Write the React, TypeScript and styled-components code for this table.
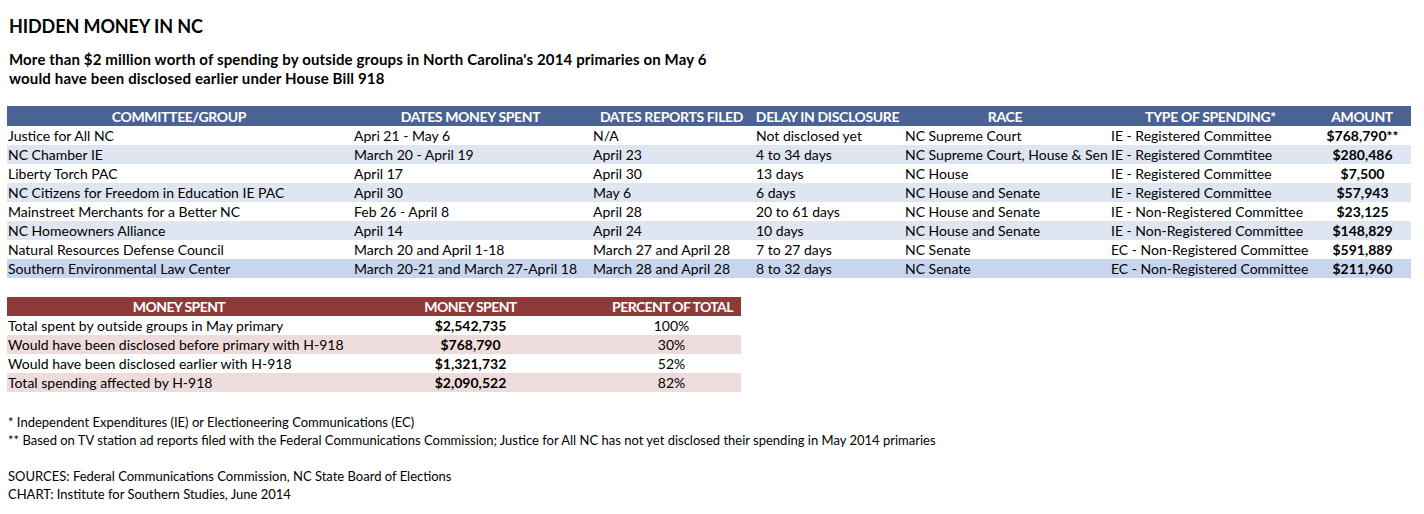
import React from "react";
import styled, { createGlobalStyle } from "styled-components";

const GlobalStyle = createGlobalStyle`
  html, body { margin: 0; padding: 0; background: #ffffff; }
  body { font-family: Lato, "Liberation Sans", sans-serif; color: #000; }
`;

const BLUE_COLS = "344px 239px 163px 149px 206px 205px 98px";
const RED_COLS = "344px 239px 151px";

const Page = styled.div`
  width: 1424px;
  height: 514px;
  box-sizing: border-box;
  padding-left: 7px;
  overflow: hidden;
`;

const Title = styled.h1`
  margin: 0;
  padding: 15px 0 0 2px;
  font-size: 18px;
  line-height: 22px;
  font-weight: 700;
  letter-spacing: -0.1px;
`;

const Subtitle = styled.p`
  margin: 13px 0 0 2px;
  font-size: 15px;
  line-height: 19px;
  font-weight: 700;
  letter-spacing: 0.15px;
`;

const Table = styled.div<{ $top: number; $width: number }>`
  margin-top: ${(p) => p.$top}px;
  width: ${(p) => p.$width}px;
`;

const Row = styled.div<{ $cols: string; $bg: string; $h: number }>`
  display: grid;
  grid-template-columns: ${(p) => p.$cols};
  height: ${(p) => p.$h}px;
  background: ${(p) => p.$bg};
`;

const HeadCell = styled.div<{ $tight?: boolean; $pl?: number }>`
  color: #fff;
  font-weight: 700;
  font-size: 14px;
  line-height: inherit;
  text-align: center;
  white-space: nowrap;
  overflow: hidden;
  padding-left: ${(p) => p.$pl ?? 0}px;
  letter-spacing: ${(p) => (p.$tight ? "-0.6px" : "-0.35px")};
  display: flex;
  align-items: center;
  justify-content: center;
`;

const Cell = styled.div<{ $align?: string; $bold?: boolean; $pl?: number }>`
  padding: 0 2px 0 ${(p) => p.$pl ?? 2}px;
  font-size: 14px;
  line-height: 19px;
  text-align: ${(p) => p.$align ?? "left"};
  font-weight: ${(p) => (p.$bold ? 700 : 400)};
  white-space: nowrap;
  overflow: hidden;
`;

const Notes = styled.div`
  margin-top: 21px;
  padding-left: 1px;
  font-size: 13px;
  line-height: 18px;
`;

const NoteLine = styled.div`
  height: 18px;
`;

const blueHead = [
  "COMMITTEE/GROUP",
  "DATES MONEY SPENT",
  "DATES REPORTS FILED",
  "DELAY IN DISCLOSURE",
  "RACE",
  "TYPE OF SPENDING*",
  "AMOUNT",
];

const blueRows: string[][] = [
  ["Justice for All NC", "Apri 21 - May 6", "N/A", "Not disclosed yet", "NC Supreme Court", "IE - Registered Committee", "$768,790**"],
  ["NC Chamber IE", "March 20 - April 19", "April 23", "4 to 34 days", "NC Supreme Court, House & Senate", "IE - Registered Commtitee", "$280,486"],
  ["Liberty Torch PAC", "April 17", "April 30", "13 days", "NC House", "IE - Registered Committee", "$7,500"],
  ["NC Citizens for Freedom in Education IE PAC", "April 30", "May 6", "6 days", "NC House and Senate", "IE - Registered Committee", "$57,943"],
  ["Mainstreet Merchants for a Better NC", "Feb 26 - April 8", "April 28", "20 to 61 days", "NC House and Senate", "IE - Non-Registered Committee", "$23,125"],
  ["NC Homeowners Alliance", "April 14", "April 24", "10 days", "NC House and Senate", "IE - Non-Registered Committee", "$148,829"],
  ["Natural Resources Defense Council", "March 20 and April 1-18", "March 27 and April 28", "7 to 27 days", "NC Senate", "EC - Non-Registered Committee", "$591,889"],
  ["Southern Environmental Law Center", "March 20-21 and March 27-April 18", "March 28 and April 28", "8 to 32 days", "NC Senate", "EC - Non-Registered Committee", "$211,960"],
];

const blueBg = ["#ffffff", "#dfe5f1", "#ffffff", "#dfe5f1", "#ffffff", "#dfe5f1", "#ffffff", "#c7d6ee"];

const redHead = ["MONEY SPENT", "MONEY SPENT", "PERCENT OF TOTAL"];
const redRows: string[][] = [
  ["Total spent by outside groups in May primary", "$2,542,735", "100%"],
  ["Would have been disclosed before primary with H-918", "$768,790", "30%"],
  ["Would have been disclosed earlier with H-918", "$1,321,732", "52%"],
  ["Total spending affected by H-918", "$2,090,522", "82%"],
];
const redBg = ["#ffffff", "#eedcdc", "#ffffff", "#eedcdc"];

export default function App() {
  return (
    <Page>
      <GlobalStyle />
      <Title>HIDDEN MONEY IN NC</Title>
      <Subtitle>
        More than $2 million worth of spending by outside groups in North Carolina's 2014 primaries on May 6
        <br />
        would have been disclosed earlier under House Bill 918
      </Subtitle>

      <Table $top={18} $width={1404}>
        <Row $cols={BLUE_COLS} $bg="#4a6392" $h={20}>
          {blueHead.map((h) => (
            <HeadCell key={h}>{h}</HeadCell>
          ))}
        </Row>
        {blueRows.map((r, i) => (
          <Row key={r[0]} $cols={BLUE_COLS} $bg={blueBg[i]} $h={19}>
            {r.map((c, j) => (
              <Cell
                key={j}
                $pl={j === 0 ? 1 : 3}
                $align={j === 6 ? "center" : "left"}
                $bold={j === 6}
              >
                {c}
              </Cell>
            ))}
          </Row>
        ))}
      </Table>

      <Table $top={19} $width={734}>
        <Row $cols={RED_COLS} $bg="#8d3a39" $h={19}>
          {redHead.map((h, i) => (
            <HeadCell key={i} $tight $pl={i === 2 ? 14 : 0}>
              {h}
            </HeadCell>
          ))}
        </Row>
        {redRows.map((r, i) => (
          <Row key={r[0]} $cols={RED_COLS} $bg={redBg[i]} $h={19}>
            {r.map((c, j) => (
              <Cell key={j} $pl={j === 0 ? 1 : j === 2 ? 14 : 2} $align={j === 0 ? "left" : "center"} $bold={j === 1}>
                {c}
              </Cell>
            ))}
          </Row>
        ))}
      </Table>

      <Notes>
        <NoteLine>* Independent Expenditures (IE) or Electioneering Communications (EC)</NoteLine>
        <NoteLine>
          ** Based on TV station ad reports filed with the Federal Communications Commission; Justice for All NC has not yet disclosed their spending in May 2014 primaries
        </NoteLine>
        <NoteLine />
        <NoteLine>SOURCES: Federal Communications Commission, NC State Board of Elections</NoteLine>
        <NoteLine>CHART: Institute for Southern Studies, June 2014</NoteLine>
      </Notes>
    </Page>
  );
}
